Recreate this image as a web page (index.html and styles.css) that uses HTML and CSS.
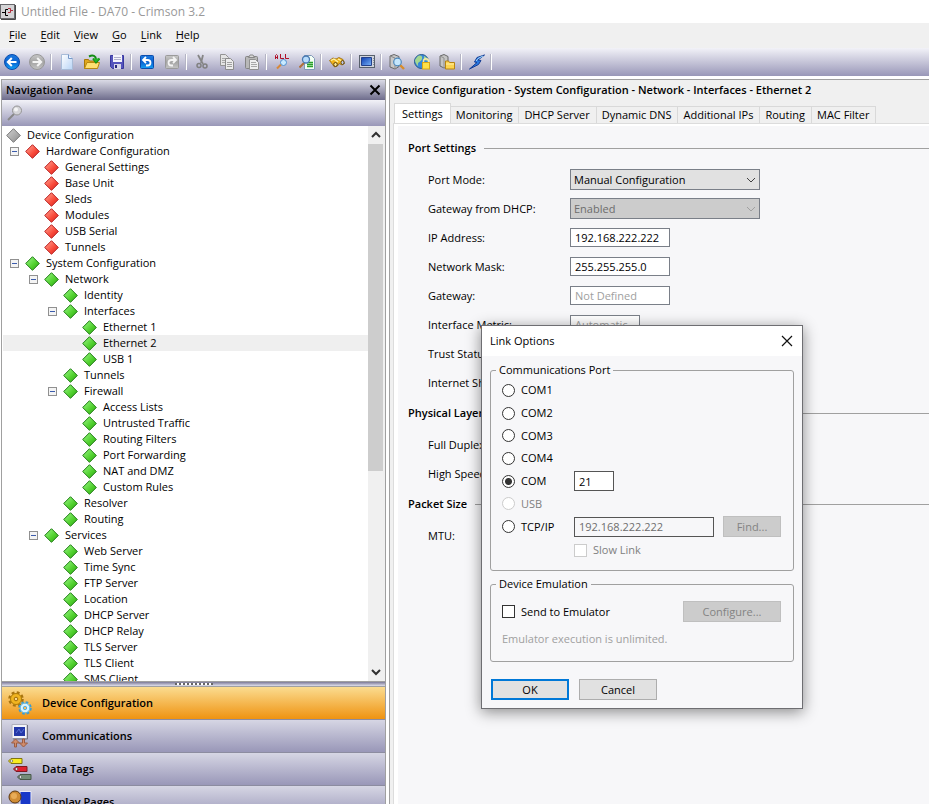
FILE: index.html
```html
<!DOCTYPE html>
<html lang="en">
<head>
<meta charset="utf-8">
<title>Untitled File - DA70 - Crimson 3.2</title>
<link rel="stylesheet" href="styles.css">
</head>
<body>
<svg class="defs" aria-hidden="true">
  <defs>
    <linearGradient id="gGreen" x1="0" y1="0" x2="1" y2="1"><stop offset=".2" stop-color="#84ec6c"/><stop offset=".6" stop-color="#4fcf2c"/><stop offset="1" stop-color="#2a9c14"/></linearGradient>
    <linearGradient id="gRed" x1="0" y1="0" x2="1" y2="1"><stop offset=".2" stop-color="#ff8a7a"/><stop offset=".6" stop-color="#f84838"/><stop offset="1" stop-color="#c82020"/></linearGradient>
    <linearGradient id="gGrey" x1="0" y1="0" x2="1" y2="1"><stop offset=".2" stop-color="#c4c4c4"/><stop offset="1" stop-color="#8c8c8c"/></linearGradient>
    <linearGradient id="gBlue" x1="0" y1="0" x2="0" y2="1"><stop offset="0" stop-color="#1c7ae0"/><stop offset=".5" stop-color="#0b62d0"/><stop offset="1" stop-color="#12a0f4"/></linearGradient>
    <linearGradient id="gBall" x1="0" y1="0" x2="0" y2="1"><stop offset="0" stop-color="#c8c8c8"/><stop offset=".5" stop-color="#a4a4a4"/><stop offset="1" stop-color="#c4c4c4"/></linearGradient>
    <linearGradient id="gPage" x1="0" y1="0" x2="1" y2="1"><stop offset="0" stop-color="#ffffff"/><stop offset="1" stop-color="#b8d4f6"/></linearGradient>
    <linearGradient id="gScreen" x1="0" y1="0" x2="1" y2="1"><stop offset="0" stop-color="#0c3cb0"/><stop offset="1" stop-color="#7ab4f8"/></linearGradient>
    <symbol id="green" viewBox="0 0 15 15"><path d="M7.500 .7 14.300 7.500 7.500 14.300 .7 7.500Z" fill="url(#gGreen)" stroke="#1c7a10"/></symbol>
    <symbol id="red" viewBox="0 0 15 15"><path d="M7.500 .7 14.300 7.500 7.500 14.300 .7 7.500Z" fill="url(#gRed)" stroke="#b81c1c"/></symbol>
    <symbol id="grey" viewBox="0 0 15 15"><path d="M7.500 .7 14.300 7.500 7.500 14.300 .7 7.500Z" fill="url(#gGrey)" stroke="#747474"/></symbol>
    <symbol id="chev" viewBox="0 0 10 10"><path d="M1 3 5 7 9 3" fill="none" stroke="currentColor"/></symbol>
  </defs>
</svg>

<header class="titlebar">
  <svg width="16" height="16" viewBox="0 0 16 16"><rect x=".5" y=".5" width="14" height="14" fill="#d4d4d6" stroke="#68686c"/><path d="M1 15.500h14.500V1" fill="none" stroke="#484848"/><path d="M2 8.500h3M8 5.500H5.500v6H8" stroke="#000" fill="none"/><path d="M8 4.500h2.500v4H8M10.500 6.500H13" stroke="#b03040" fill="none"/></svg>
  <span>Untitled File - DA70 - Crimson 3.2</span>
</header>

<nav class="menubar">
  <button type="button"><u>F</u>ile</button><button type="button"><u>E</u>dit</button><button type="button"><u>V</u>iew</button><button type="button"><u>G</u>o</button><button type="button"><u>L</u>ink</button><button type="button"><u>H</u>elp</button>
</nav>

<div class="toolbar">
  <button type="button" aria-label="Back"><svg viewBox="0 0 16 16"><circle cx="8" cy="8" r="7.500" fill="url(#gBlue)" stroke="#0a4cae"/><path d="M12.500 8H4M7.800 4 3.800 8l4 4" fill="none" stroke="#fff" stroke-width="2"/></svg></button>
  <button type="button" aria-label="Forward"><svg viewBox="0 0 16 16"><circle cx="8" cy="8" r="7.500" fill="url(#gBall)" stroke="#989898"/><path d="M3.500 8H12M8.200 4l4 4-4 4" fill="none" stroke="#f4f4f4" stroke-width="2"/></svg></button>
  <i class="sep"></i>
  <button type="button" aria-label="New"><svg viewBox="0 0 16 16"><path d="M2.500 .5h7l4 4v11h-11z" fill="url(#gPage)" stroke="#a8bcd8"/><path d="M9.500 .5v4h4" fill="#e8f2ff" stroke="#7898c8"/></svg></button>
  <button type="button" aria-label="Open"><svg viewBox="0 0 16 16"><path d="M.5 14.500v-9h4l1 1.500h8v7z" fill="#e0a81c" stroke="#a87808"/><path d="M.5 14.500 3 8.500h12.500l-2 6z" fill="#ffe070" stroke="#b88810"/><path d="M5 2.500c4-2 7-.5 7 3M9 4.500l3 4 3.500-4" fill="none" stroke="#148c14" stroke-width="2"/><path d="M9 4.500h6.500l-3.500 4z" fill="#24b424"/></svg></button>
  <button type="button" aria-label="Save"><svg viewBox="0 0 16 16"><path d="M1.500 1.500h13v13h-11l-2-2z" fill="#5454bc" stroke="#3838a0"/><path d="M4 1h9v7H4z" fill="#f4f4fc"/><path d="M5 3.500h7M5 5.500h7" stroke="#b0b0cc"/><path d="M5 10h7v5H5z" fill="#d8d8e8"/><path d="M6 11h2v3H6z" fill="#28287c"/></svg></button>
  <i class="sep"></i>
  <button type="button" aria-label="Undo"><svg viewBox="0 0 16 16"><rect x="1.500" y="1.500" width="13" height="13" rx="1" fill="url(#gBlue)" stroke="#0a4cae"/><path d="M7 3 4 6l3 3M4 6h4.500c4 0 4 5.500 0 5.500H7" fill="none" stroke="#fff" stroke-width="1.800"/></svg></button>
  <button type="button" aria-label="Redo"><svg viewBox="0 0 16 16"><rect x="1.500" y="1.500" width="13" height="13" rx="1" fill="url(#gBall)" stroke="#9a9a9a"/><path d="M9 3l3 3-3 3M12 6H7.500c-4 0-4 5.500 0 5.500H9" fill="none" stroke="#f4f4f4" stroke-width="1.800"/></svg></button>
  <i class="sep"></i>
  <button type="button" aria-label="Cut"><svg viewBox="0 0 16 16"><path d="M4 1l5 9M9 1 7 9" stroke="#868686" stroke-width="1.800"/><circle cx="5" cy="11.500" r="2" fill="none" stroke="#808080" stroke-width="1.500"/><circle cx="11" cy="12" r="2" fill="none" stroke="#808080" stroke-width="1.500"/></svg></button>
  <button type="button" aria-label="Copy"><svg viewBox="0 0 16 16"><path d="M1.500 .5h5l3 3v8h-8z" fill="#e4e4e4" stroke="#949494"/><path d="M3 4.500h4M3 6.500h4M3 8.500h4" stroke="#a8a8a8"/><path d="M6.500 4.500h5l3 3v8h-8z" fill="#ececec" stroke="#8c8c8c"/><path d="M8 8.500h5M8 10.500h5M8 12.500h5" stroke="#a0a0a0"/></svg></button>
  <button type="button" aria-label="Paste"><svg viewBox="0 0 16 16"><rect x="1.500" y="2.500" width="12" height="12" rx="1" fill="#b8b8b8" stroke="#848484"/><path d="M4.500 3.500 6 1h3l1.500 2.500z" fill="#d8d8d8" stroke="#888"/><path d="M5.500 5.500h6l3 3v7h-9z" fill="#efefef" stroke="#909090"/><path d="M7 8.500h5M7 10.500h6M7 12.500h6" stroke="#a8a8a8"/></svg></button>
  <i class="sep"></i>
  <button type="button" aria-label="Find all"><svg viewBox="0 0 16 16"><path d="M1.500 5V1.500l1-1 1 1V5M1.500 3.500h2M6.500 0v4.500H10M11.500 0v4.500H15" fill="none" stroke="#b01028"/><path d="M3 14.500 7 10.500" stroke="#d88838" stroke-width="2"/><circle cx="9.500" cy="8.500" r="3" fill="#c8eaff" stroke="#5090d0"/></svg></button>
  <button type="button" aria-label="Find in page"><svg viewBox="0 0 16 16"><path d="M5.500 1.500h7l3 3v11h-10z" fill="#f4fff4" stroke="#8098b8"/><path d="M8 8.500h6M8 10.500h6M8 12.500h6" stroke="#28a028" stroke-width="1.300"/><path d="M.5 13.500 5 9" stroke="#b07038" stroke-width="2"/><circle cx="7" cy="5.500" r="3.500" fill="#b8dcfc" stroke="#4878b0" stroke-width="1.300"/></svg></button>
  <i class="sep"></i>
  <button type="button" aria-label="Binoculars"><svg viewBox="0 0 16 16"><path d="M.5 6.500 4 4l3 1 3-1.500 4 2 1.500 4-2.500 1.500-3-1.500-1.500 2.500-3 1-2-2.500z" fill="#f0b41c" stroke="#98680c" stroke-width=".8"/><path d="M2 6.500l3-1.500 4 3M9 5l3 1.500" stroke="#fff4a8" fill="none" stroke-width="1.300"/><ellipse cx="6.500" cy="10.500" rx="1.800" ry="2" fill="#fce890" stroke="#5c4008"/><ellipse cx="13.500" cy="8.500" rx="1.500" ry="2" fill="#c0c8e0" stroke="#4a3408" stroke-width=".8"/></svg></button>
  <i class="sep"></i>
  <button type="button" aria-label="Screen"><svg viewBox="0 0 16 16"><rect x=".5" y="1.500" width="15" height="12" fill="#d0d4dc" stroke="#58606c"/><path d="M2.500 3.500h10v8h-10z" fill="url(#gScreen)" stroke="#24408c"/><path d="M14.500 4v8" stroke="#8890a0" stroke-dasharray="1 1"/></svg></button>
  <i class="sep"></i>
  <button type="button" aria-label="Inspect device"><svg viewBox="0 0 16 16"><path d="M1 2 5 .5l5 2v10L6 15l-5-2z" fill="#c8c8c8" stroke="#686868"/><path d="M1 2l5 2v11" fill="none" stroke="#888"/><path d="M11 11l4 4" stroke="#d88c28" stroke-width="2.400"/><circle cx="8.500" cy="8" r="3.800" fill="#c4e6fc" stroke="#4c88bc" stroke-width="1.200"/></svg></button>
  <button type="button" aria-label="Web security"><svg viewBox="0 0 16 16"><circle cx="7.500" cy="7.500" r="7" fill="#3888d8" stroke="#28588c"/><path d="M3 3c3-3 6-1 5 2S3 8 4 11 1 9 1 6zM10 2c3 1 4 3 4 5l-4-1z" fill="#a4d890"/><path d="M9.500 9.500V7c0-3 5-3 5 0v2.500" fill="none" stroke="#f4e8a8" stroke-width="1.500"/><rect x="8.500" y="8.500" width="7" height="6.500" fill="#ffe048" stroke="#d8a818"/></svg></button>
  <button type="button" aria-label="Device folder"><svg viewBox="0 0 16 16"><path d="M1 2 5 .5l4 2v10L5 14l-4-2z" fill="#c4c4c4" stroke="#686868"/><path d="M1 2l4 2v10" fill="none" stroke="#909090"/><path d="M6.500 15v-8h3l1 1.500h5V15z" fill="#fcd450" stroke="#b88410"/><path d="M7 10h8" stroke="#fff0a8"/></svg></button>
  <i class="sep"></i>
  <button type="button" aria-label="Connect"><svg viewBox="0 0 16 16"><path d="M15.500 1 8 3.500 5.500 8 8 8.500.5 15l9-4.500 2.500-4-3-.5z" fill="#2878e0" stroke="#143c94"/><path d="M14 2 9 4.500 7 7" fill="none" stroke="#a8dcff"/></svg></button>
  <i class="sep"></i>
</div>

<div class="workspace">
  <aside class="navpane">
    <div class="navhead"><h2>Navigation Pane</h2><button type="button" aria-label="Close pane"><svg width="12" height="12" viewBox="0 0 12 12"><path d="M1.500 1.500l9 9M10.500 1.500l-9 9" stroke="#000" stroke-width="2"/></svg></button></div>
    <div class="navsearch"><svg width="16" height="16" viewBox="0 0 16 16"><path d="M1 15l6-6" stroke="#888" stroke-width="2"/><circle cx="10" cy="5.500" r="4.500" fill="#d4d4d8" stroke="#949494"/><circle cx="9" cy="4.500" r="2" fill="#f4f4f4"/></svg></div>
    <div class="treebox">
      <ul class="tree">
        <li class="l0"><svg><use href="#grey"/></svg>Device Configuration</li>
        <li class="l1"><b></b><svg><use href="#red"/></svg>Hardware Configuration</li>
        <li class="l2"><svg><use href="#red"/></svg>General Settings</li>
        <li class="l2"><svg><use href="#red"/></svg>Base Unit</li>
        <li class="l2"><svg><use href="#red"/></svg>Sleds</li>
        <li class="l2"><svg><use href="#red"/></svg>Modules</li>
        <li class="l2"><svg><use href="#red"/></svg>USB Serial</li>
        <li class="l2"><svg><use href="#red"/></svg>Tunnels</li>
        <li class="l1"><b></b><svg><use href="#green"/></svg>System Configuration</li>
        <li class="l2"><b></b><svg><use href="#green"/></svg>Network</li>
        <li class="l3"><svg><use href="#green"/></svg>Identity</li>
        <li class="l3"><b></b><svg><use href="#green"/></svg>Interfaces</li>
        <li class="l4"><svg><use href="#green"/></svg>Ethernet 1</li>
        <li class="l4 selected"><svg><use href="#green"/></svg>Ethernet 2</li>
        <li class="l4"><svg><use href="#green"/></svg>USB 1</li>
        <li class="l3"><svg><use href="#green"/></svg>Tunnels</li>
        <li class="l3"><b></b><svg><use href="#green"/></svg>Firewall</li>
        <li class="l4"><svg><use href="#green"/></svg>Access Lists</li>
        <li class="l4"><svg><use href="#green"/></svg>Untrusted Traffic</li>
        <li class="l4"><svg><use href="#green"/></svg>Routing Filters</li>
        <li class="l4"><svg><use href="#green"/></svg>Port Forwarding</li>
        <li class="l4"><svg><use href="#green"/></svg>NAT and DMZ</li>
        <li class="l4"><svg><use href="#green"/></svg>Custom Rules</li>
        <li class="l3"><svg><use href="#green"/></svg>Resolver</li>
        <li class="l3"><svg><use href="#green"/></svg>Routing</li>
        <li class="l2"><b></b><svg><use href="#green"/></svg>Services</li>
        <li class="l3"><svg><use href="#green"/></svg>Web Server</li>
        <li class="l3"><svg><use href="#green"/></svg>Time Sync</li>
        <li class="l3"><svg><use href="#green"/></svg>FTP Server</li>
        <li class="l3"><svg><use href="#green"/></svg>Location</li>
        <li class="l3"><svg><use href="#green"/></svg>DHCP Server</li>
        <li class="l3"><svg><use href="#green"/></svg>DHCP Relay</li>
        <li class="l3"><svg><use href="#green"/></svg>TLS Server</li>
        <li class="l3"><svg><use href="#green"/></svg>TLS Client</li>
        <li class="l3"><svg><use href="#green"/></svg>SMS Client</li>
      </ul>
      <div class="scroll"><svg class="up"><use href="#chev"/></svg><div class="thumb"></div><svg><use href="#chev"/></svg></div>
    </div>
    <div class="splitter"><i></i></div>
    <div class="cats">
      <button type="button" class="active"><svg viewBox="0 0 24 24"><circle cx="8" cy="8" r="6.500" fill="none" stroke="#a87410" stroke-width="2.500" stroke-dasharray="2.800 2.300"/><circle cx="8" cy="8" r="5.500" fill="#f0b420" stroke="#b07c08"/><circle cx="8" cy="8" r="1.800" fill="#fbd88a" stroke="#a06c08"/><circle cx="17" cy="17" r="5.500" fill="none" stroke="#3c9cd0" stroke-width="2.500" stroke-dasharray="2.500 1.820"/><circle cx="17" cy="17" r="4.800" fill="#d8f4ff" stroke="#64b8e0"/><circle cx="17" cy="17" r="1.700" fill="#f8c060" stroke="#58acd8"/></svg>Device Configuration</button>
      <button type="button"><svg viewBox="0 0 24 24"><path d="M4 .5h15v14H4z" fill="#f4f4f8" stroke="#b0b0bc"/><path d="M6 3h11v9H6z" fill="#2438a8"/><path d="M8 9l3-4 2 4 3-4" stroke="#5870d8" fill="none"/><path d="M19.500 1v14H5" fill="none" stroke="#707080"/><path d="M6.500 23v-4H3.500l4-4 4 4h-3v4zM14.500 15v4h-3l4 4 4-4h-3v-4z" fill="#d08c6c" stroke="#9c5c40"/></svg>Communications</button>
      <button type="button"><svg viewBox="0 0 24 24"><path d="M.5 4 3 1.500h11v5H3z" fill="#f8ec20" stroke="#807410"/><path d="M5.500 12 8 9.500h11v5H8z" fill="#e02030" stroke="#801820"/><path d="M9.500 20 12 17.500h11v5H12z" fill="#748c78" stroke="#485848"/><g fill="#fff" stroke="#333" stroke-width=".5"><circle cx="3.500" cy="4" r="1.200"/><circle cx="8.500" cy="12" r="1.200"/><circle cx="12.500" cy="20" r="1.200"/></g></svg>Data Tags</button>
      <button type="button"><svg viewBox="0 0 24 24"><path d="M12 1.500h11v16H12z" fill="#1838c8" stroke="#e8e8f4"/><circle cx="7" cy="7" r="6" fill="#d08c34" stroke="#5c3810"/><circle cx="6" cy="6" r="3" fill="#e8ac58"/><path d="M3 17h10v6H3z" fill="#c03020" stroke="#501008"/></svg>Display Pages</button>
    </div>
  </aside>

  <main class="editor">
    <h1>Device Configuration - System Configuration - Network - Interfaces - Ethernet 2</h1>
    <div class="tabs"><button type="button" class="on">Settings</button><button type="button">Monitoring</button><button type="button">DHCP Server</button><button type="button">Dynamic DNS</button><button type="button">Additional IPs</button><button type="button">Routing</button><button type="button">MAC Filter</button></div>
    <form class="page">
      <section>
        <h3>Port Settings</h3>
        <div class="row"><label for="mode">Port Mode:</label><span class="combo"><select id="mode"><option>Manual Configuration</option></select><svg><use href="#chev"/></svg></span></div>
        <div class="row"><label for="gwd">Gateway from DHCP:</label><span class="combo off"><select id="gwd" disabled><option>Enabled</option></select><svg><use href="#chev"/></svg></span></div>
        <div class="row"><label for="ip">IP Address:</label><input id="ip" value="192.168.222.222"></div>
        <div class="row"><label for="mask">Network Mask:</label><input id="mask" value="255.255.255.0"></div>
        <div class="row"><label for="gw">Gateway:</label><input id="gw" placeholder="Not Defined"></div>
        <div class="row"><label for="metric">Interface Metric:</label><input id="metric" class="short" placeholder="Automatic"></div>
        <div class="row"><span>Trust Status:</span></div>
        <div class="row"><span>Internet Sharing:</span></div>
      </section>
      <section>
        <h3>Physical Layer</h3>
        <div class="row"><span>Full Duplex:</span></div>
        <div class="row"><span>High Speed:</span></div>
      </section>
      <section>
        <h3>Packet Size</h3>
        <div class="row"><span>MTU:</span></div>
      </section>
    </form>
  </main>
</div>

<form class="dialog" role="dialog" aria-labelledby="dlg">
  <div class="dlghead"><h2 id="dlg">Link Options</h2><button type="button" aria-label="Close"><svg width="12" height="12" viewBox="0 0 12 12"><path d="M1 1l10 10M11 1 1 11" stroke="#111" stroke-width="1.200"/></svg></button></div>
  <div class="dlgbody">
    <fieldset class="port">
      <legend>Communications Port</legend>
      <div class="radios">
        <div class="opt"><label><input type="radio" name="port">COM1</label></div>
        <div class="opt"><label><input type="radio" name="port">COM2</label></div>
        <div class="opt"><label><input type="radio" name="port">COM3</label></div>
        <div class="opt"><label><input type="radio" name="port">COM4</label></div>
        <div class="opt"><label><input type="radio" name="port" checked>COM</label><input class="num" aria-label="COM port number" value="21"></div>
        <div class="opt"><label class="dim"><input type="radio" name="port" disabled>USB</label></div>
        <div class="opt"><label><input type="radio" name="port">TCP/IP</label><input class="addr" aria-label="TCP/IP address" value="192.168.222.222" disabled><button type="button" class="find" disabled>Find...</button></div>
      </div>
      <div class="slow"><label class="dim"><input type="checkbox" disabled>Slow Link</label></div>
    </fieldset>
    <fieldset class="emu">
      <legend>Device Emulation</legend>
      <div class="opt"><label class="wide"><input type="checkbox">Send to Emulator</label><button type="button" class="conf" disabled>Configure...</button></div>
      <p>Emulator execution is unlimited.</p>
    </fieldset>
    <div class="actions"><button type="submit" class="ok">OK</button><button type="button">Cancel</button></div>
  </div>
</form>
</body>
</html>
```
FILE: styles.css
```css
* { box-sizing: border-box; }
html, body { height: 100%; }
body {
  margin: 0;
  display: flex;
  flex-direction: column;
  overflow: hidden;
  background: #fff;
  color: #000;
  font: 11px/16px "Open Sans", "Noto Sans", sans-serif;
}
button, input, select { font: inherit; color: inherit; }
button { background: none; border: 0; padding: 0; }
h1, h2, h3, p, ul { margin: 0; padding: 0; font-size: 11px; }
h1, h2, h3 { font-weight: 600; }
.defs { position: absolute; width: 0; height: 0; }

.titlebar { flex: none; height: 23px; display: flex; align-items: center; gap: 5px; color: #999; font-size: 12px; }
.menubar { flex: none; height: 25px; display: flex; align-items: center; gap: 14px; padding: 0 9px 2px; background: #f0f0f0; }
.menubar u { text-underline-offset: 2px; }
.toolbar { flex: none; height: 28px; display: flex; align-items: center; background: linear-gradient(#f2f2f8, #9997b8); }
.toolbar button { width: 25px; height: 25px; display: grid; place-items: center start; padding-left: 4px; }
.toolbar button svg { width: 16px; height: 16px; }
.sep { width: 5px; height: 16px; background: linear-gradient(90deg, #b4b4c4 1px, #fff 1px 2px, transparent 2px); }

.workspace { flex: 1; min-height: 0; display: flex; gap: 3px; padding: 3px 0 0 1px; }
.navpane { flex: none; width: 385px; display: flex; flex-direction: column; border: 1px solid #a0a0a0; border-bottom: 0; }
.navhead { flex: none; height: 20px; display: flex; align-items: center; justify-content: space-between; padding: 0 4px; background: linear-gradient(#dadae6, #6e6c8c); }
.navhead button { display: flex; }
.navsearch { flex: none; height: 26px; display: flex; align-items: center; padding: 0 5px; background: linear-gradient(#f2f2f8, #9997b8); }
.treebox { flex: 1; min-height: 0; display: flex; overflow: hidden; padding-left: 1px; }
.tree { flex: 1; list-style: none; padding-top: 1px; overflow: hidden; }
.tree li { display: flex; align-items: center; height: 16px; white-space: nowrap; }
.tree svg { width: 15px; height: 15px; margin: 0 6px 0 22px; flex: none; }
.tree .l0 svg { margin-left: 3px; }
.tree .l2 { padding-left: 19px; }
.tree .l3 { padding-left: 38px; }
.tree .l4 { padding-left: 57px; }
.tree b { flex: none; width: 9px; height: 9px; margin: 0 6px 0 7px; border: 1px solid #909090; background: linear-gradient(#3c5cac, #3c5cac) center / 5px 1px no-repeat, #f4f4f4; }
.tree b + svg { margin-left: 0; }
.tree .selected { background: #efefef; }
.scroll { flex: none; width: 17px; display: flex; flex-direction: column; align-items: center; justify-content: space-between; padding: 4px 2px 4px 0; background: #f0f0f0; color: #303030; }
.scroll svg { width: 10px; height: 10px; stroke-width: 2; }
.scroll .up { transform: rotate(180deg); }
.thumb { width: 15px; height: 327px; margin: 4px 0 auto; background: #cdcdcd; }
.splitter { flex: none; height: 6px; display: grid; place-items: center; border-top: 1px solid #a0a0a0; border-bottom: 1px solid #a0a0a0; background: linear-gradient(#7c7a98, #e0e0ec); }
.splitter i { width: 38px; height: 2px; background: repeating-linear-gradient(90deg, #666 0 2px, #fff 2px 4px); }
.cats { flex: none; height: 117px; overflow: hidden; }
.cats button { width: 100%; height: 33px; display: flex; align-items: center; gap: 10px; padding: 0 6px; font-weight: 600; background: linear-gradient(#d6d6e4, #9997b8); border-bottom: 1px solid #8c8ca0; }
.cats .active { background: linear-gradient(#fbdc90, #ef9311); }
.cats svg { width: 24px; height: 24px; }

.editor { flex: 1; min-width: 0; display: flex; flex-direction: column; padding-left: 4px; background: #f0f0f0; border: 1px solid #a0a0a0; border-width: 1px 0 0 1px; }
.editor h1 { flex: none; height: 24px; line-height: 20px; white-space: nowrap; }
.tabs { flex: none; height: 20px; display: flex; align-items: flex-end; border-bottom: 1px solid #d9d9d9; white-space: nowrap; }
.tabs button { height: 17px; padding: 0 6px 0 5px; border: 1px solid #d9d9d9; border-width: 1px 1px 0 0; }
.tabs .on { height: 21px; margin-bottom: -1px; padding: 0 7px; background: #fff; border-left-width: 1px; }
.page { flex: 1; min-height: 0; padding: 7px 0 0 10px; background: #f7f7f9; border-top: 2px solid #fff; border-left: 4px solid #fff; outline: 1px solid #dcdcdc; }
.page section { padding-bottom: 1px; }
.page h3 { display: flex; align-items: center; gap: 8px; height: 30px; margin-bottom: 2px; }
.page h3::after { content: ""; flex: 1; height: 1px; background: #a0a0a0; }
.row { display: grid; grid-template-columns: 142px 1fr; align-items: center; height: 29px; padding-left: 20px; white-space: nowrap; }
.row input { width: 100px; height: 19px; padding: 0 4px; border: 1px solid #7a7f88; background: #fff; }
.row input.short { width: 70px; }
.row input::placeholder { color: #a0a0a0; opacity: 1; }
.combo { position: relative; width: 190px; height: 21px; }
.combo select { display: block; width: 100%; height: 100%; padding: 0 3px; appearance: none; border: 1px solid #7a7f88; border-radius: 0; background: #e1e1e1; opacity: 1; }
.combo svg { position: absolute; right: 4px; top: 6px; width: 10px; height: 10px; color: #404040; pointer-events: none; }
.combo.off select { background: #ccc; color: #6d6d6d; }
.combo.off svg { color: #a0a0a0; }

.dialog { position: absolute; left: 481px; top: 325px; width: 322px; border: 1px solid #6e6e72; background: #f7f7f9; box-shadow: 0 3px 14px rgba(0, 0, 0, .45); }
.dlghead { height: 30px; display: flex; align-items: center; justify-content: space-between; padding: 0 9px 0 8px; background: #fff; }
.dlghead h2 { font-weight: normal; }
.dlghead button { display: flex; }
.dlgbody { padding: 6px 8px 8px; }
.dlgbody fieldset { margin: 0; min-width: 0; border: 1px solid #a0a0a0; border-radius: 3px; }
.dlgbody legend { height: 16px; margin-left: -6px; padding: 0 3px; }
.port { padding: 1px 12px 8px 11px; }
.radios { display: grid; grid-template-rows: repeat(7, 1fr); height: 159px; }
.opt { display: flex; align-items: center; min-height: 0; }
.opt label, .slow label { display: flex; align-items: center; gap: 6px; }
.opt label { width: 72px; }
.opt .wide { width: auto; }
.opt button { margin-left: auto; }
.dim { color: #808080; }
input[type="radio"], input[type="checkbox"] { appearance: none; flex: none; width: 13px; height: 13px; margin: 0; border: 1px solid #333; background: #fff; }
input[type="radio"] { border-radius: 50%; }
input[type="radio"]:checked { background: radial-gradient(#333 3px, #fff 4px); }
input[type="radio"]:disabled, input[type="checkbox"]:disabled { border-color: #ccc; }
.num, .addr { height: 20px; padding: 0 4px; border: 1px solid #555; background: #fff; }
.num { width: 40px; }
.addr { width: 140px; }
.addr:disabled { color: #6d6d6d; background: #f7f7f9; }
.slow { height: 24px; display: flex; align-items: center; padding-left: 72px; }
.dlgbody button { height: 21px; background: #e1e1e1; border: 1px solid #adadad; }
.dlgbody button:disabled { background: #ccc; border-color: #bfbfbf; color: #838383; }
.dlgbody .find { width: 58px; }
.dlgbody .conf { width: 98px; }
.emu { padding: 9px 12px 14px 11px; }
.dlgbody .emu { margin-top: 5px; }
.emu p { margin-top: 9px; color: #a0a0a0; }
.actions { display: flex; gap: 10px; margin: 17px 0 0 1px; }
.actions button { width: 78px; }
.dlgbody .ok { border: 2px solid #0078d7; }
```
